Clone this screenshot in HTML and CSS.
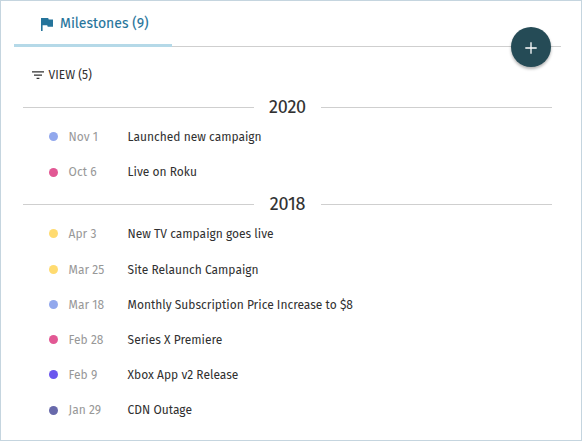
FILE: index.html
```html
<!DOCTYPE html>
<html lang="en">
<head>
<meta charset="utf-8">
<title>Milestones</title>
<link rel="stylesheet" href="styles.css">
</head>
<body>
<main class="panel">
  <header class="tabs">
    <div class="tab">
      <svg class="flag" viewBox="0 0 12 13"><path d="M0 0h7.2l.5 1.5H12v7.2H6.7l-.5-1.5H1.6V13H0z"/></svg>
      <span class="tab-label">Milestones (9)</span>
    </div>
    <button class="add" aria-label="Add milestone"><svg viewBox="0 0 12 12"><path d="M6 .3v11.4M.3 6h11.4"/></svg></button>
  </header>
  <div class="filter">
    <svg class="filter-icon" viewBox="0 0 12 8"><path d="M0 .8h12M2 4.1h8M4.6 7.3h2.8"/></svg>
    <span class="filter-label">VIEW (5)</span>
  </div>
  <section class="group">
    <h2 class="year"><span>2020</span></h2>
    <ul class="list">
      <li><i class="dot blue"></i><time>Nov 1</time><span>Launched new campaign</span></li>
      <li><i class="dot pink"></i><time>Oct 6</time><span>Live on Roku</span></li>
    </ul>
  </section>
  <section class="group">
    <h2 class="year"><span>2018</span></h2>
    <ul class="list">
      <li><i class="dot yellow"></i><time>Apr 3</time><span>New TV campaign goes live</span></li>
      <li><i class="dot yellow"></i><time>Mar 25</time><span>Site Relaunch Campaign</span></li>
      <li><i class="dot blue"></i><time>Mar 18</time><span>Monthly Subscription Price Increase to $8</span></li>
      <li><i class="dot pink"></i><time>Feb 28</time><span>Series X Premiere</span></li>
      <li><i class="dot violet"></i><time>Feb 9</time><span>Xbox App v2 Release</span></li>
      <li><i class="dot indigo"></i><time>Jan 29</time><span>CDN Outage</span></li>
    </ul>
  </section>
</main>
</body>
</html>
```
FILE: styles.css
```css
* { box-sizing: border-box; }
body { margin: 0; background: #fff; font-family: "Fira Sans", "Noto Sans", sans-serif; color: #303030; }
.panel { width: 582px; height: 441px; border: 1px solid #c5d5df; overflow: hidden; }
.tabs { position: relative; height: 46px; margin: 0 20px 0 13px; border-bottom: 1px solid #cfcfcf; }
.tab { display: flex; align-items: center; width: 158px; height: 46px; padding: 2px 0 0 27px; border-bottom: 3px solid #b5d9e8; color: #25749b; }
.flag { width: 12px; height: 13px; margin-right: 7px; fill: currentColor; position: relative; top: 1px; }
.tab-label { font-size: 14px; line-height: 20px; white-space: nowrap; -webkit-text-stroke: .1px; }
.add { position: absolute; left: 497px; top: 26px; width: 40px; height: 40px; border: 0; border-radius: 50%; padding: 0; display: flex; align-items: center; justify-content: center; background: #254b56; box-shadow: 0 2px 3px rgba(0,0,0,.3); }
.add svg { width: 12px; height: 12px; margin-top: 2px; fill: none; stroke: #fff; stroke-width: 1.3; }
.filter { display: flex; align-items: center; height: 20px; margin: 18px 0 0 30.5px; }
.filter-icon { width: 12px; height: 8px; margin-right: 5px; fill: none; stroke: #303030; stroke-width: 1.3; }
.filter-label { font-size: 12px; }
.group { width: 529px; margin-left: 22px; }
.filter + .group { margin-top: 9px; }
.year { display: flex; align-items: center; height: 26px; margin: 0; font-size: 18px; font-weight: 400; line-height: 26px; -webkit-text-stroke: .1px; }
.year::before, .year::after { content: ""; height: 1px; flex: 1; background: #cfcfcf; }
.year span { width: 67px; text-align: center; letter-spacing: -.2px; }
.list { list-style: none; margin: 0; padding: 0 0 0 25.6px; }
.list li { display: flex; align-items: center; height: 35.1px; font-size: 12px; white-space: nowrap; position: relative; top: -.6px; }
.group:nth-of-type(1) .list { height: 71px; }
.group:nth-of-type(2) li { top: 0; }
.group:nth-of-type(2) li:first-child { top: -.6px; }
.dot { width: 9px; height: 9px; margin-right: 11px; border-radius: 50%; }
time { width: 59px; color: #989898; }
.blue { background: #92a8ed; }
.pink { background: #e25894; }
.yellow { background: #ffdb70; }
.violet { background: #6b57ee; }
.indigo { background: #6869ab; }
```
